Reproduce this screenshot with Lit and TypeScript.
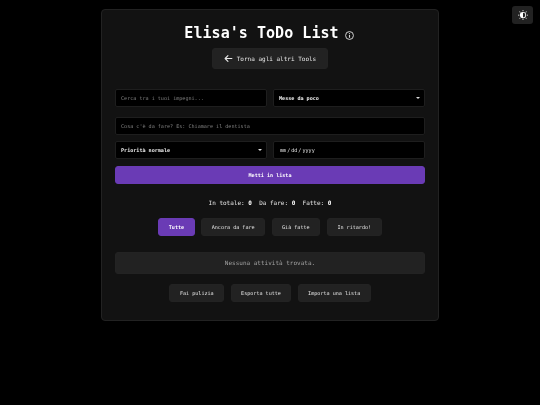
import { LitElement, html, css } from "lit";
import { customElement } from "lit/decorators.js";

@customElement("app-root")
export class AppRoot extends LitElement {
  static styles = css`
    :host { display: block; width: 540px; height: 405px; background: #000; overflow: hidden; position: relative;
      font-family: "DejaVu Sans Mono", "Liberation Mono", monospace; color: #e0e0e0; color-scheme: dark;
      will-change: transform; }
    * { box-sizing: border-box; font-family: inherit; }
    .page { padding-top: 9px; display: flex; justify-content: center; }
    .card { width: 338px; height: 312px; background: #121212; border: 1px solid #222; border-radius: 4px;
      padding: 13px 13px 0; display: flex; flex-direction: column; align-items: stretch; }
    .head { display: flex; justify-content: center; align-items: center; gap: 6px; height: 20px; padding-right: 2px; }
    h1 { margin: 0; font-size: 15px; line-height: 20px; font-weight: 700; color: #fff; letter-spacing: 0.05px; }
    .info { width: 9px; height: 9px; margin-top: 4px; color: #d8d8d8; display: block; }
    .back-wrap { display: flex; justify-content: center; margin-top: 5px; }
    .btn { background: #222; border: 1px solid #232323; border-radius: 3px; color: #e6e6e6; padding: 0; display: inline-flex;
      align-items: center; justify-content: center; font-size: 5.1px; height: 18px; font-weight: 500; }
    .back { width: 116px; height: 21px; font-size: 6px; gap: 4px; }
    .back svg { width: 9px; height: 9px; }
    .row { display: grid; grid-template-columns: 152px 152px; column-gap: 6px; }
    .first { margin-top: 20px; }
    input, select { display: block; height: 18px; width: 100%; background: #000; border: 1px solid #1e1e1e; border-radius: 2px; color: #eee;
      font-size: 5.1px; padding: 0 5px; outline: none; margin: 0; font-weight: 500; }
    select { appearance: none; -webkit-appearance: none; font-weight: 700; }
    input::placeholder { color: #808080; opacity: 1; }
    input[type="date"] { color: #e6e6e6; }
    input[type="date"]::-webkit-calendar-picker-indicator { opacity: 0; }
    input[type="date"]::-webkit-datetime-edit { padding: 0; }
    .sel { position: relative; display: block; }
    .sel::after { content: ""; position: absolute; right: 5px; top: 8px; width: 0; height: 0;
      border-left: 2.5px solid transparent; border-right: 2.5px solid transparent; border-top: 2.5px solid #ddd; }
    .wide { margin-top: 10px; }
    .third { margin-top: 6px; }
    .add { margin-top: 7px; width: 310px; background: #6a3bb5; border-color: #6a3bb5; color: #fff; font-weight: 700; }
    .stats { margin: 15px 0 0; text-align: center; font-size: 6px; line-height: 8px; color: #e6e6e6; white-space: pre; }
    .stats b { color: #fff; }
    .filters { display: flex; justify-content: center; gap: 6.7px; margin-top: 11px; }
    .filters .btn { height: 17.5px; }
    .tutte { width: 36.5px; background: #6a3bb5 !important; border-color: #6a3bb5 !important; color: #fff !important; font-weight: 700 !important; }
    .f2 { width: 63.5px; } .f3 { width: 48.5px; } .f4 { width: 55px; }
    .empty { margin-top: 16.5px; height: 21.5px; background: #222; border: 1px solid #232323; border-radius: 3px;
      font-size: 6px; color: #a0a0a0; display: flex; align-items: center; justify-content: center; }
    .actions { display: flex; justify-content: center; gap: 6.7px; margin-top: 10px; }
    .a1 { width: 55px; } .a2 { width: 60px; } .a3 { width: 73px; }
    .theme { position: absolute; top: 6px; right: 7px; width: 21px; height: 18px; background: #222; border: none;
      border-radius: 3px; display: flex; align-items: center; justify-content: center; padding: 0; }
    .theme svg { width: 10px; height: 10px; color: #fff; }
  `;

  render() {
    return html`
      <div class="page">
        <div class="card">
          <div class="head">
            <h1>Elisa's ToDo List</h1>
            <svg class="info" viewBox="0 0 16 16" fill="none" stroke="currentColor">
              <circle cx="8" cy="8" r="7" stroke-width="1.7"></circle>
              <path d="M8 7v5" stroke-width="2"></path>
              <circle cx="8" cy="4.6" r="1.1" fill="currentColor" stroke="none"></circle>
            </svg>
          </div>
          <div class="back-wrap">
            <button class="btn back">
              <svg viewBox="0 0 16 16" fill="none" stroke="currentColor" stroke-width="2" stroke-linecap="round" stroke-linejoin="round">
                <path d="M14 8H2M7 3L2 8l5 5"></path>
              </svg>
              Torna agli altri Tools
            </button>
          </div>
          <div class="row first">
            <input placeholder="Cerca tra i tuoi impegni..." />
            <span class="sel"><select><option>Messe da poco</option></select></span>
          </div>
          <div class="wide"><input placeholder="Cosa c'è da fare? Es: Chiamare il dentista" /></div>
          <div class="row third">
            <span class="sel"><select><option>Priorità normale</option></select></span>
            <input type="date" />
          </div>
          <button class="btn add">Metti in lista</button>
          <p class="stats">In totale: <b>0</b>  Da fare: <b>0</b>  Fatte: <b>0</b></p>
          <div class="filters">
            <button class="btn tutte">Tutte</button>
            <button class="btn f2">Ancora da fare</button>
            <button class="btn f3">Già fatte</button>
            <button class="btn f4">In ritardo!</button>
          </div>
          <div class="empty">Nessuna attività trovata.</div>
          <div class="actions">
            <button class="btn a1">Fai pulizia</button>
            <button class="btn a2">Esporta tutte</button>
            <button class="btn a3">Importa una lista</button>
          </div>
        </div>
      </div>
      <button class="theme" aria-label="Tema">
        <svg viewBox="0 0 16 16" fill="currentColor">
          <path d="M8 3a5 5 0 1 0 0 10 5 5 0 0 0 0-10zm0 1.2a3.8 3.8 0 0 1 0 7.6z" fill-rule="evenodd"></path>
          <path d="M7.4 0h1.2v2H7.4zM7.4 14h1.2v2H7.4zM0 7.4h2v1.2H0zM14 7.4h2v1.2h-2zM2 2.8l.8-.8 1.4 1.4-.8.8zM11.8 12.6l.8-.8 1.4 1.4-.8.8zM2 13.2l1.4-1.4.8.8-1.4 1.4zM11.8 3.4L13.2 2l.8.8-1.4 1.4z"></path>
        </svg>
      </button>
    `;
  }
}
